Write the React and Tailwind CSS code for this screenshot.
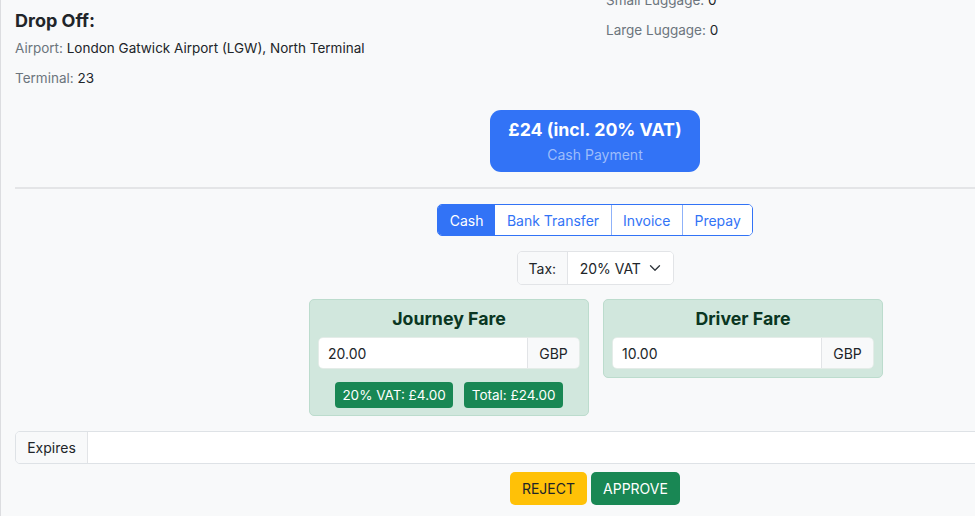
import React from "react";
import { ChevronDown } from "lucide-react";

export default function App() {
  const font = { fontFamily: "Inter, 'Noto Sans', sans-serif" };
  return (
    <div
      className="h-[516px] w-[975px] overflow-hidden bg-[#f8f9fa] border-l border-[#dcdde0] text-[14px] text-[#212529]"
      style={font}
    >
      <div className="w-[1160px] ml-[14px]">
        {/* top info row */}
        <div className="flex items-start text-[13.5px]">
          <div className="w-[580px] pt-[9.5px]">
            <h5 className="text-[18px] font-bold leading-[21px] mb-[7px] text-[#212529]">Drop Off:</h5>
            <p className="leading-[21px] mb-[9px]">
              <span className="text-[#6c757d]">Airport: </span>London Gatwick Airport (LGW), North Terminal
            </p>
            <p className="leading-[21px]">
              <span className="text-[#6c757d]">Terminal: </span>23
            </p>
          </div>
          <div className="w-[580px] pl-[11px] -mt-[10px]">
            <p className="leading-[21px] mb-[9px]">
              <span className="text-[#6c757d]">Small Luggage: </span>0
            </p>
            <p className="leading-[21px]">
              <span className="text-[#6c757d]">Large Luggage: </span>0
            </p>
          </div>
        </div>

        {/* price badge */}
        <div className="flex justify-center mt-[21.5px]">
          <div className="w-[210px] rounded-[11px] bg-[#3273f6] text-center pt-[9px] pb-[7px]">
            <div className="text-[17.75px] font-bold leading-[22px] text-white">£24 (incl. 20% VAT)</div>
            <div className="mt-[3px] leading-[21px] text-[#9dbdfb]">Cash Payment</div>
          </div>
        </div>

        {/* divider */}
        <div className="mt-[15px] h-[2px] bg-[#e4e5e7]" />

        {/* payment tabs */}
        <div className="flex justify-center mt-[15px]">
          <div className="flex h-[32px] rounded-[5px] border border-[#3273f6] overflow-hidden">
            <div className="flex items-center px-[12px] bg-[#3273f6] text-white">Cash</div>
            <div className="flex items-center px-[11.5px] bg-white text-[#3273f6]">Bank Transfer</div>
            <div className="flex items-center px-[11.5px] bg-white text-[#3273f6] border-l border-[#8fb2f9]">Invoice</div>
            <div className="flex items-center px-[11.5px] bg-white text-[#3273f6] border-l border-[#8fb2f9]">Prepay</div>
          </div>
        </div>

        {/* tax */}
        <div className="flex justify-center mt-[15px] pl-[1px]">
          <div className="flex h-[34px] rounded-[5px] border border-[#e2e4e7] overflow-hidden">
            <div className="flex items-center px-[10.5px] bg-[#f8f9fa] border-r border-[#e2e4e7]">Tax:</div>
            <div className="flex items-center bg-white pl-[12px] pr-[9px] gap-[5px]">
              <span>20% VAT</span>
              <ChevronDown size={18} strokeWidth={1.8} className="text-[#343a40]" />
            </div>
          </div>
        </div>

        {/* fares */}
        <div className="flex justify-center items-start gap-[14px] mt-[14px] pl-[2px]">
          <div className="w-[280px] rounded-[5px] bg-[#d1e7dd] border border-[#bcdccd] px-[8px] pt-[8px] pb-[7px]">
            <div className="text-center text-[17.75px] font-bold leading-[21px] text-[#0a3622]">Journey Fare</div>
            <div className="flex h-[32px] mt-[8px] rounded-[5px] overflow-hidden border border-[#e4ece8]">
              <div className="flex-1 flex items-center bg-white pl-[9px]">20.00</div>
              <div className="w-[52px] flex items-center justify-center bg-[#f8f9fa] border-l border-[#e2e4e7]">GBP</div>
            </div>
            <div className="flex justify-center gap-[11px] mt-[13px] text-[13.5px]">
              <div className="h-[26px] flex items-center px-[7.5px] rounded-[4px] bg-[#198754] text-white">20% VAT: £4.00</div>
              <div className="h-[26px] flex items-center px-[7.5px] rounded-[4px] bg-[#198754] text-white">Total: £24.00</div>
            </div>
          </div>
          <div className="w-[280px] rounded-[5px] bg-[#d1e7dd] border border-[#bcdccd] px-[8px] pt-[8px] pb-[8px]">
            <div className="text-center text-[17.75px] font-bold leading-[21px] text-[#0a3622]">Driver Fare</div>
            <div className="flex h-[32px] mt-[8px] rounded-[5px] overflow-hidden border border-[#e4ece8]">
              <div className="flex-1 flex items-center bg-white pl-[9px]">10.00</div>
              <div className="w-[52px] flex items-center justify-center bg-[#f8f9fa] border-l border-[#e2e4e7]">GBP</div>
            </div>
          </div>
        </div>

        {/* expires */}
        <div className="flex h-[33px] mt-[15px] rounded-[5px] border border-[#dee2e6] overflow-hidden">
          <div className="w-[72px] flex items-center justify-center bg-[#f8f9fa] border-r border-[#e2e4e7]">Expires</div>
          <div className="flex-1 bg-white" />
        </div>

        {/* actions */}
        <div className="flex justify-center gap-[4px] mt-[8px]">
          <button className="h-[33px] w-[77px] rounded-[5px] bg-[#ffc107] text-[#212529] text-[14px]">REJECT</button>
          <button className="h-[33px] w-[89px] rounded-[5px] bg-[#198754] text-white text-[14px]">APPROVE</button>
        </div>
      </div>
    </div>
  );
}
